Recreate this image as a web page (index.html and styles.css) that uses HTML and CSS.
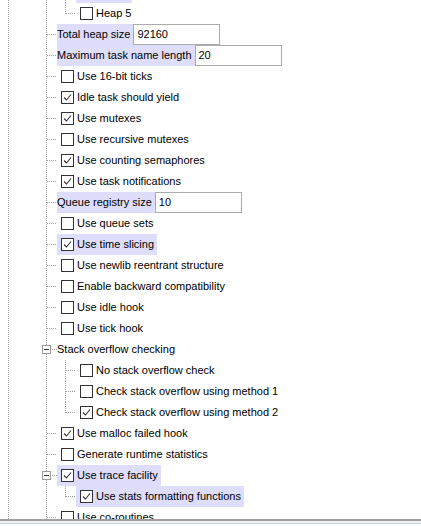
FILE: index.html
```html
<!DOCTYPE html>
<html>
<head>
<meta charset="utf-8">
<link rel="stylesheet" href="styles.css">
</head>
<body>
<div class="panel">
  <div class="tree">
    <div class="rows">
      <div class="row strip"><span class="ind3"></span><span class="conn v"></span><span class="item cbitem sel stripsel"></span></div>
      <div class="row"><span class="ind3"></span><span class="conn vlast"></span><span class="item cbitem"><svg class="cb" viewBox="0 0 13 13"><rect x="0.5" y="0.5" width="12" height="12"/></svg><span>Heap 5</span></span></div>
      <div class="row"><span class="ind2"></span><span class="conn"></span><span class="item txt sel">Total heap size</span><span class="field">92160</span></div>
      <div class="row"><span class="ind2"></span><span class="conn"></span><span class="item txt sel">Maximum task name length</span><span class="field">20</span></div>
      <div class="row"><span class="ind2"></span><span class="conn"></span><span class="item cbitem"><svg class="cb" viewBox="0 0 13 13"><rect x="0.5" y="0.5" width="12" height="12"/></svg><span>Use 16-bit ticks</span></span></div>
      <div class="row"><span class="ind2"></span><span class="conn"></span><span class="item cbitem"><svg class="cb" viewBox="0 0 13 13"><rect x="0.5" y="0.5" width="12" height="12"/><path d="M3 6.5 L5.5 9 L10 3.5"/></svg><span>Idle task should yield</span></span></div>
      <div class="row"><span class="ind2"></span><span class="conn"></span><span class="item cbitem"><svg class="cb" viewBox="0 0 13 13"><rect x="0.5" y="0.5" width="12" height="12"/><path d="M3 6.5 L5.5 9 L10 3.5"/></svg><span>Use mutexes</span></span></div>
      <div class="row"><span class="ind2"></span><span class="conn"></span><span class="item cbitem"><svg class="cb" viewBox="0 0 13 13"><rect x="0.5" y="0.5" width="12" height="12"/></svg><span>Use recursive mutexes</span></span></div>
      <div class="row"><span class="ind2"></span><span class="conn"></span><span class="item cbitem"><svg class="cb" viewBox="0 0 13 13"><rect x="0.5" y="0.5" width="12" height="12"/><path d="M3 6.5 L5.5 9 L10 3.5"/></svg><span>Use counting semaphores</span></span></div>
      <div class="row"><span class="ind2"></span><span class="conn"></span><span class="item cbitem"><svg class="cb" viewBox="0 0 13 13"><rect x="0.5" y="0.5" width="12" height="12"/><path d="M3 6.5 L5.5 9 L10 3.5"/></svg><span>Use task notifications</span></span></div>
      <div class="row"><span class="ind2"></span><span class="conn"></span><span class="item txt sel">Queue registry size</span><span class="field">10</span></div>
      <div class="row"><span class="ind2"></span><span class="conn"></span><span class="item cbitem"><svg class="cb" viewBox="0 0 13 13"><rect x="0.5" y="0.5" width="12" height="12"/></svg><span>Use queue sets</span></span></div>
      <div class="row"><span class="ind2"></span><span class="conn"></span><span class="item cbitem sel"><svg class="cb" viewBox="0 0 13 13"><rect x="0.5" y="0.5" width="12" height="12"/><path d="M3 6.5 L5.5 9 L10 3.5"/></svg><span>Use time slicing</span></span></div>
      <div class="row"><span class="ind2"></span><span class="conn"></span><span class="item cbitem"><svg class="cb" viewBox="0 0 13 13"><rect x="0.5" y="0.5" width="12" height="12"/></svg><span>Use newlib reentrant structure</span></span></div>
      <div class="row"><span class="ind2"></span><span class="conn"></span><span class="item cbitem"><svg class="cb" viewBox="0 0 13 13"><rect x="0.5" y="0.5" width="12" height="12"/></svg><span>Enable backward compatibility</span></span></div>
      <div class="row"><span class="ind2"></span><span class="conn"></span><span class="item cbitem"><svg class="cb" viewBox="0 0 13 13"><rect x="0.5" y="0.5" width="12" height="12"/></svg><span>Use idle hook</span></span></div>
      <div class="row"><span class="ind2"></span><span class="conn"></span><span class="item cbitem"><svg class="cb" viewBox="0 0 13 13"><rect x="0.5" y="0.5" width="12" height="12"/></svg><span>Use tick hook</span></span></div>
      <div class="row"><span class="indbox"></span><span class="toggle"><span class="minus"></span></span><span class="conn short"></span><span class="item txt">Stack overflow checking</span></div>
      <div class="row"><span class="ind3"></span><span class="conn v"></span><span class="item cbitem"><svg class="cb" viewBox="0 0 13 13"><rect x="0.5" y="0.5" width="12" height="12"/></svg><span>No stack overflow check</span></span></div>
      <div class="row"><span class="ind3"></span><span class="conn v"></span><span class="item cbitem"><svg class="cb" viewBox="0 0 13 13"><rect x="0.5" y="0.5" width="12" height="12"/></svg><span>Check stack overflow using method 1</span></span></div>
      <div class="row"><span class="ind3"></span><span class="conn vlast"></span><span class="item cbitem"><svg class="cb" viewBox="0 0 13 13"><rect x="0.5" y="0.5" width="12" height="12"/><path d="M3 6.5 L5.5 9 L10 3.5"/></svg><span>Check stack overflow using method 2</span></span></div>
      <div class="row"><span class="ind2"></span><span class="conn"></span><span class="item cbitem"><svg class="cb" viewBox="0 0 13 13"><rect x="0.5" y="0.5" width="12" height="12"/><path d="M3 6.5 L5.5 9 L10 3.5"/></svg><span>Use malloc failed hook</span></span></div>
      <div class="row"><span class="ind2"></span><span class="conn"></span><span class="item cbitem"><svg class="cb" viewBox="0 0 13 13"><rect x="0.5" y="0.5" width="12" height="12"/></svg><span>Generate runtime statistics</span></span></div>
      <div class="row"><span class="indbox"></span><span class="toggle"><span class="minus"></span></span><span class="conn short"></span><span class="item cbitem sel"><svg class="cb" viewBox="0 0 13 13"><rect x="0.5" y="0.5" width="12" height="12"/><path d="M3 6.5 L5.5 9 L10 3.5"/></svg><span>Use trace facility</span></span></div>
      <div class="row"><span class="ind3"></span><span class="conn vlast"></span><span class="item cbitem sel"><svg class="cb" viewBox="0 0 13 13"><rect x="0.5" y="0.5" width="12" height="12"/><path d="M3 6.5 L5.5 9 L10 3.5"/></svg><span>Use stats formatting functions</span></span></div>
      <div class="row"><span class="ind2"></span><span class="conn"></span><span class="item cbitem"><svg class="cb" viewBox="0 0 13 13"><rect x="0.5" y="0.5" width="12" height="12"/></svg><span>Use co-routines</span></span></div>
    </div>
  </div>
  <div class="bottom">
    <div class="edge1"></div>
    <div class="edge2"></div>
    <div class="edge3"></div>
  </div>
</div>
</body>
</html>
```

FILE: styles.css
```css
html, body {
  margin: 0;
  padding: 0;
  background: #ffffff;
}
body {
  font-family: "Liberation Sans", Arial, sans-serif;
  font-size: 11px;
  color: #000;
}
.panel {
  width: 421px;
  height: 527px;
  display: flex;
  flex-direction: column;
  overflow: hidden;
}
.tree {
  height: 519px;
  flex: none;
  overflow: hidden;
  background-image:
    linear-gradient(#a0a0a0 1px, transparent 1px),
    linear-gradient(#a0a0a0 1px, transparent 1px);
  background-size: 1px 2px, 1px 2px;
  background-position: 8px 0, 46px 0;
  background-repeat: repeat-y, repeat-y;
}
.rows {
  display: flex;
  flex-direction: column;
}
.row {
  height: 21px;
  display: flex;
  align-items: stretch;
  white-space: nowrap;
}
.row.strip { height: 3px; }
.stripsel { width: 56px; box-sizing: border-box; }
.ind2 { width: 46px; flex: none; }
.ind3 { width: 65px; flex: none; }
.indbox { width: 42px; flex: none; }
.conn {
  width: 11px;
  flex: none;
  background-image: linear-gradient(to right, #a0a0a0 1px, transparent 1px);
  background-size: 2px 1px;
  background-repeat: repeat-x;
  background-position: 1px 10px;
}
.conn.v {
  background-image:
    linear-gradient(to right, #a0a0a0 1px, transparent 1px),
    linear-gradient(#a0a0a0 1px, transparent 1px);
  background-size: 2px 1px, 1px 2px;
  background-repeat: repeat-x, repeat-y;
  background-position: 1px 10px, 0 0;
}
.conn.vlast::before {
  content: "";
  display: block;
  width: 1px;
  height: 11px;
  background-image: linear-gradient(#a0a0a0 1px, transparent 1px);
  background-size: 1px 2px;
}
.conn.short {
  width: 6px;
  background-position: 1px 10px;
}
.toggle {
  width: 9px;
  height: 9px;
  box-sizing: border-box;
  margin-top: 6px;
  border: 1px solid #9a9a9a;
  background: #fff;
  flex: none;
  display: flex;
  align-items: center;
  justify-content: center;
}
.minus {
  width: 5px;
  height: 1px;
  background: #3c3c3c;
}
.item {
  display: flex;
  align-items: center;
  line-height: 21px;
  flex: none;
}
.item.cbitem { padding: 0 3px 0 4px; }
.item.txt { padding: 0 3px 0 0; }
.sel { background: #dedefc; }
.cb {
  width: 13px;
  height: 13px;
  margin-right: 3px;
  flex: none;
}
.cb rect {
  fill: #fff;
  stroke: #333;
  stroke-width: 1;
}
.cb path {
  fill: none;
  stroke: #333;
  stroke-width: 1.1;
}
.field {
  width: 87px;
  height: 21px;
  box-sizing: border-box;
  border: 1px solid #ababab;
  background: #fff;
  padding: 0 3px;
  line-height: 19px;
  flex: none;
}
.bottom {
  flex: none;
  display: flex;
  flex-direction: column;
}
.edge1 { height: 2px; background: #a0a0a0; }
.edge2 { height: 2px; background: #f0f0f0; }
.edge3 { height: 1px; background: #c8d6ea; }
```
